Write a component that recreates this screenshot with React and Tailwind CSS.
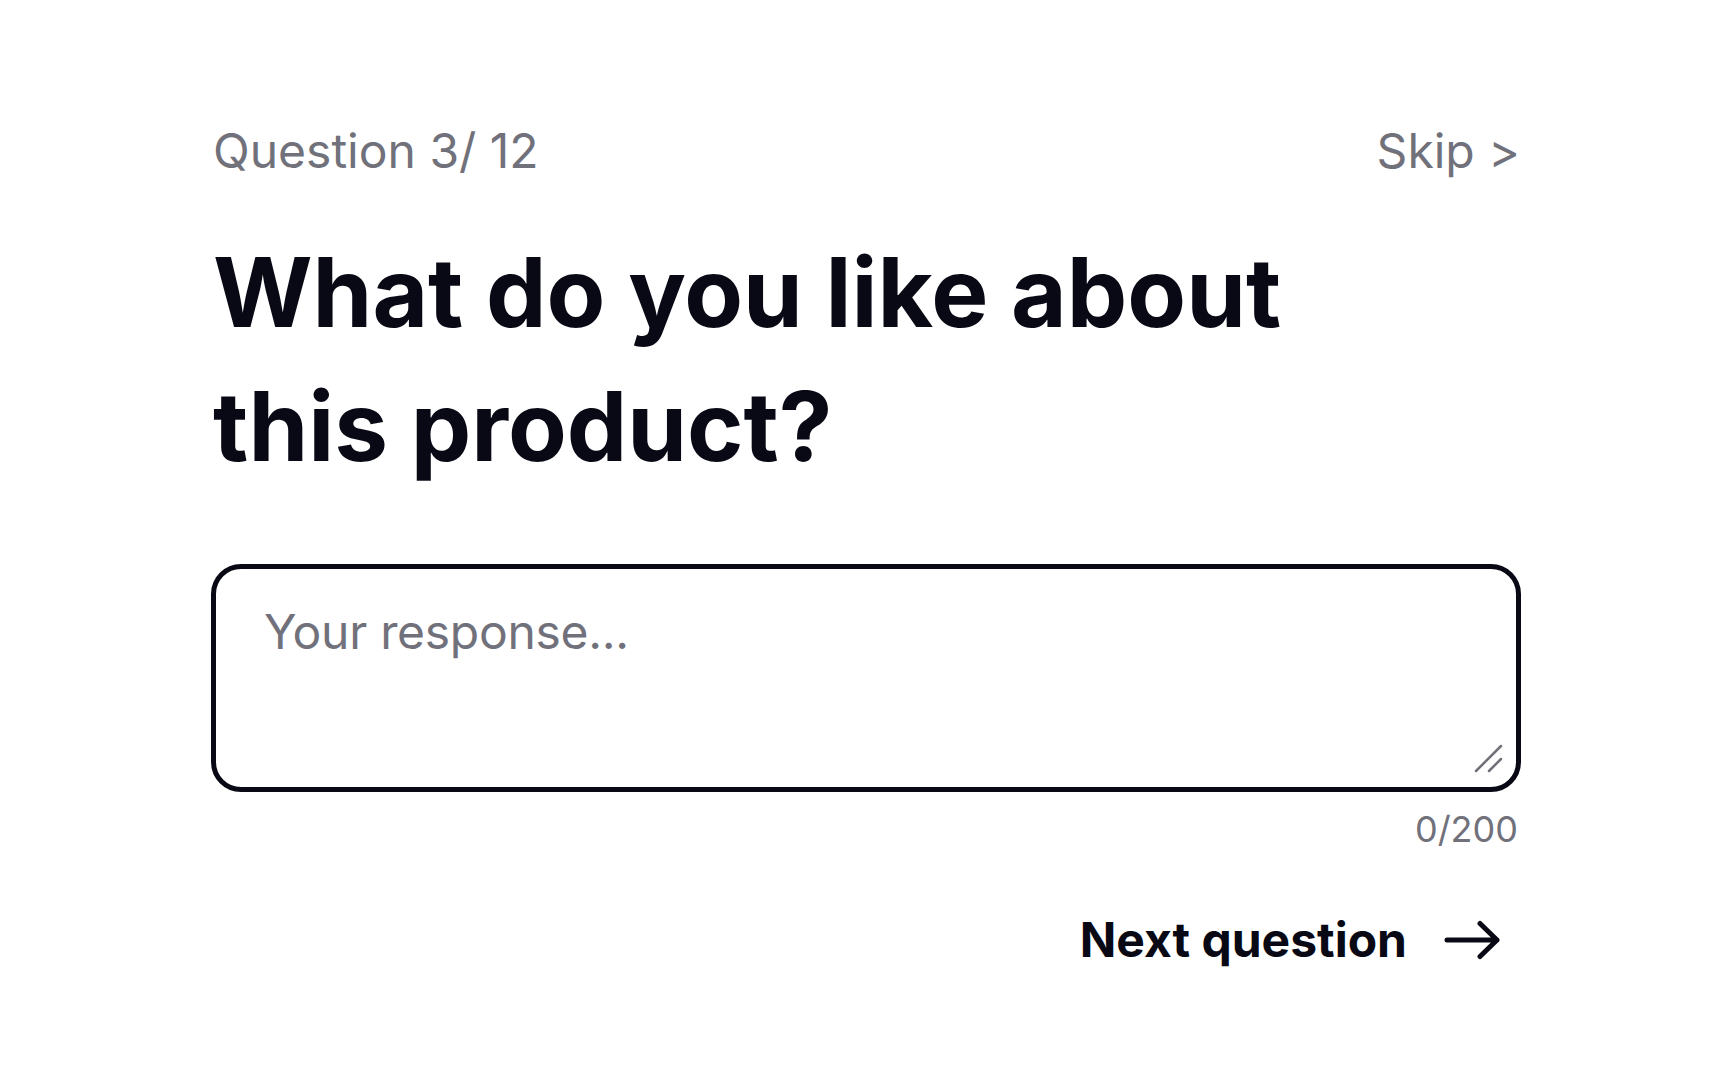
import React, { useState } from "react";

function ArrowRight() {
  return (
    <svg width="58" height="40" viewBox="0 0 58 40" fill="none" className="shrink-0">
      <path
        d="M4 20h50M37 3.5L54 20 37 36.5"
        stroke="#080914"
        strokeWidth="5"
        strokeLinecap="round"
        strokeLinejoin="round"
      />
    </svg>
  );
}

function ResizeGrip() {
  return (
    <svg
      width="30"
      height="30"
      viewBox="0 0 30 30"
      fill="none"
      className="absolute right-[18px] bottom-[18px] pointer-events-none"
    >
      <path d="M28 2L3 27M28 15L16 27" stroke="#71717a" strokeWidth="2.5" strokeLinecap="round" />
    </svg>
  );
}

export default function App() {
  const [value, setValue] = useState("");

  return (
    <div className="min-h-screen bg-white pl-[4px] font-['Inter',sans-serif] text-[#080914]">
      <div className="w-[1310px] mx-auto pt-[115px]">
        <div className="flex items-center justify-between text-[48px] leading-[1.5] text-zinc-500">
          <span className="pl-[2px]">Question 3/ 12</span>
          <button className="leading-[1.5] text-zinc-500 pr-[1px]">Skip &gt;</button>
        </div>

        <h1 className="mt-[38px] pl-[2px] text-[96px] leading-[1.4] font-bold">
          What do you like about
          <br />
          this product?
        </h1>

        <div className="relative mt-[70px]">
          <textarea
            value={value}
            onChange={(e) => setValue(e.target.value.slice(0, 200))}
            placeholder="Your response..."
            className="block w-full h-[228px] resize-none rounded-[30px] border-[5px] border-[#080914] pt-[27px] px-[48px] text-[48px] leading-[1.5] tracking-[-0.3px] text-[#080914] placeholder:text-zinc-500 outline-none"
          />
          <ResizeGrip />
        </div>

        <div className="mt-[10px] text-right text-[36px] leading-[1.5] text-zinc-500 pr-[3px]">
          {value.length}/200
        </div>

        <div className="mt-[48px] flex justify-end">
          <button className="flex items-center gap-[36px] pr-[20px] text-[48px] leading-[1.5] font-bold text-[#080914]">
            Next question
            <ArrowRight />
          </button>
        </div>
      </div>
    </div>
  );
}
